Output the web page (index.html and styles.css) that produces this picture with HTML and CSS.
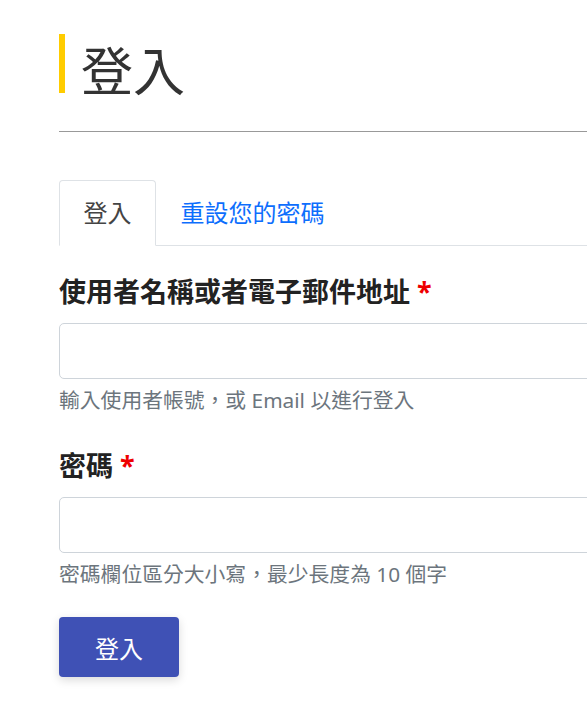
FILE: index.html
```html
<!DOCTYPE html>
<html lang="zh-Hant">
<head>
  <meta charset="UTF-8">
  <meta name="viewport" content="width=device-width, initial-scale=1.0">
  <title>登入</title>
  <link rel="stylesheet" href="styles.css">
</head>
<body>
  <div class="page">
    <h1 class="page-title"><span>登入</span></h1>
    <hr class="title-rule">

    <ul class="tabs">
      <li><a class="tab active" href="#">登入</a></li>
      <li><a class="tab" href="#">重設您的密碼</a></li>
    </ul>

    <form class="login-form">
      <div class="field">
        <label for="name">使用者名稱或者電子郵件地址 <span class="req">*</span></label>
        <input type="text" id="name">
        <div class="help">輸入使用者帳號，或 Email 以進行登入</div>
      </div>

      <div class="field">
        <label for="pass">密碼 <span class="req">*</span></label>
        <input type="password" id="pass">
        <div class="help">密碼欄位區分大小寫，最少長度為 10 個字</div>
      </div>

      <button type="submit" class="btn">登入</button>
    </form>
  </div>
</body>
</html>
```

FILE: styles.css
```css
html, body {
  margin: 0;
  padding: 0;
  overflow-x: hidden;
}

body {
  font-family: "Noto Sans", "Noto Sans CJK TC", sans-serif;
  background-color: #fff;
  color: #333;
}

.page {
  width: 620px;
  padding: 34px 0 40px 59px;
}

.page-title {
  display: flex;
  align-items: flex-start;
  margin: 0;
  font-size: 52px;
  font-weight: 400;
  line-height: 74px;
  color: #333;
}

.page-title::before {
  content: "";
  flex: none;
  width: 6px;
  height: 59px;
  background-color: #ffcc00;
  margin-right: 16px;
}

.title-rule {
  margin: 23px 0 0;
  border: 0;
  border-top: 1px solid #999;
}

.tabs {
  display: flex;
  list-style: none;
  margin: 48px 0 0;
  padding: 0;
  border-bottom: 1px solid #dee2e6;
}

.tab {
  display: block;
  margin-bottom: -1px;
  padding: 0 23.5px;
  line-height: 64px;
  font-size: 24px;
  color: #0d6efd;
  text-decoration: none;
  border: 1px solid transparent;
  border-radius: 4px 4px 0 0;
}

.tab.active {
  color: #444;
  background-color: #fff;
  border-color: #dee2e6 #dee2e6 #fff;
}

.login-form {
  display: flex;
  flex-direction: column;
  align-items: flex-start;
}

.field {
  width: 100%;
  margin-top: 26px;
}

.field + .field {
  margin-top: 31px;
}

.field label {
  display: block;
  font-size: 27px;
  font-weight: 700;
  line-height: 40px;
  color: #222;
  margin-bottom: 11px;
}

.req {
  color: #e00;
}

.field input {
  display: block;
  box-sizing: border-box;
  width: 100%;
  height: 56px;
  border: 1px solid #ced4da;
  border-radius: 5px;
  font-size: 20px;
  padding: 0 14px;
}

.help {
  margin-top: 6px;
  font-size: 20.8px;
  line-height: 30px;
  color: #6c757d;
}

.btn {
  margin-top: 28px;
  height: 60px;
  padding: 0 36px;
  font-family: inherit;
  font-size: 24px;
  color: #fff;
  background-color: #3f51b5;
  border: 0;
  border-radius: 4px;
  box-shadow: 0 3px 10px rgba(0, 0, 0, 0.15);
}
```
